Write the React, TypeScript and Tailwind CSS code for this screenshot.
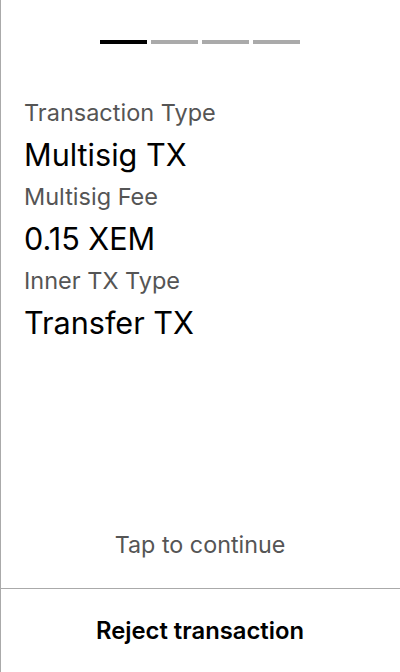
import React from "react";

const fields = [
  { label: "Transaction Type", value: "Multisig TX" },
  { label: "Multisig Fee", value: "0.15 XEM" },
  { label: "Inner TX Type", value: "Transfer TX" },
];

const App = () => {
  return (
    <div
      className="flex h-[672px] w-[400px] flex-col bg-white text-black shadow-[inset_1px_0_0_#aaaaaa]"
      style={{ fontFamily: "Inter, 'Noto Sans', sans-serif" }}
    >
      {/* step indicator */}
      <div className="flex justify-center gap-1 pt-10">
        <div className="h-1 w-[47px] bg-black" />
        <div className="h-1 w-[47px] bg-[#aaaaaa]" />
        <div className="h-1 w-[47px] bg-[#aaaaaa]" />
        <div className="h-1 w-[47px] bg-[#aaaaaa]" />
      </div>

      <div className="flex flex-col px-6 pt-[55px]">
        {fields.map((f) => (
          <div key={f.label} className="flex flex-col">
            <div className="text-[23.5px] leading-[28px] text-[#555555]">{f.label}</div>
            <div className="text-[30.6px] leading-[56px]">{f.value}</div>
          </div>
        ))}
      </div>

      <div className="mt-auto pb-[29px] text-center text-[23.3px] leading-[28px] text-[#555555]">
        Tap to continue
      </div>
      <button className="h-[84px] w-full border-t border-[#aaaaaa] text-[23.8px] font-semibold">
        Reject transaction
      </button>
    </div>
  );
};

export default App;
